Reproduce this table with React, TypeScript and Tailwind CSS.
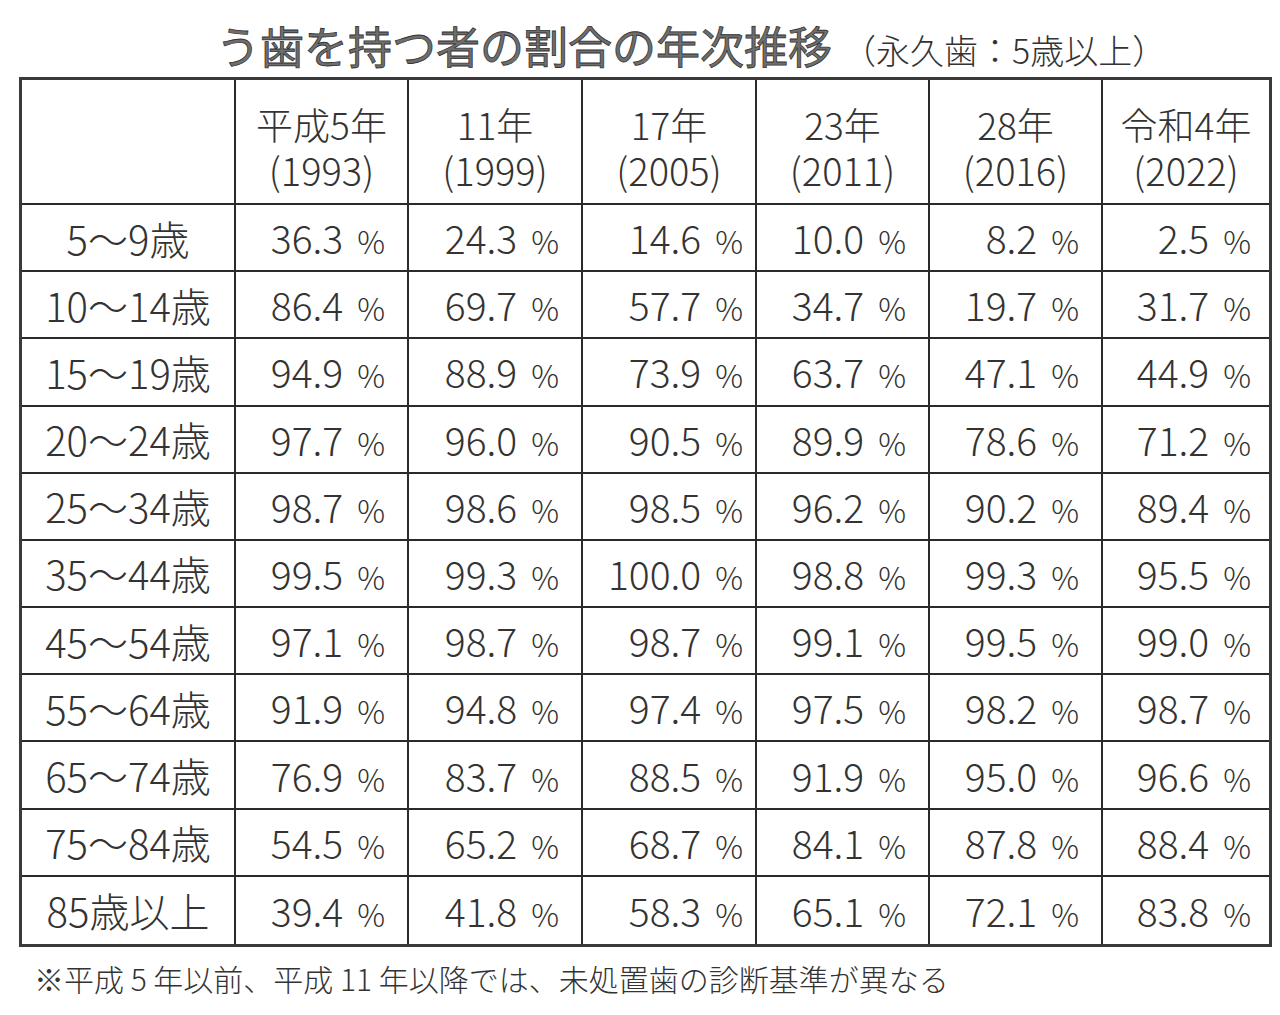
import React from "react";

const FONT = { fontFamily: '"Noto Sans CJK JP", "Noto Sans", sans-serif' };

const headers: [string, string][] = [
  ["平成5年", "(1993)"],
  ["11年", "(1999)"],
  ["17年", "(2005)"],
  ["23年", "(2011)"],
  ["28年", "(2016)"],
  ["令和4年", "(2022)"],
];

const rows: [string, string[]][] = [
  ["5〜9歳", ["36.3", "24.3", "14.6", "10.0", "8.2", "2.5"]],
  ["10〜14歳", ["86.4", "69.7", "57.7", "34.7", "19.7", "31.7"]],
  ["15〜19歳", ["94.9", "88.9", "73.9", "63.7", "47.1", "44.9"]],
  ["20〜24歳", ["97.7", "96.0", "90.5", "89.9", "78.6", "71.2"]],
  ["25〜34歳", ["98.7", "98.6", "98.5", "96.2", "90.2", "89.4"]],
  ["35〜44歳", ["99.5", "99.3", "100.0", "98.8", "99.3", "95.5"]],
  ["45〜54歳", ["97.1", "98.7", "98.7", "99.1", "99.5", "99.0"]],
  ["55〜64歳", ["91.9", "94.8", "97.4", "97.5", "98.2", "98.7"]],
  ["65〜74歳", ["76.9", "83.7", "88.5", "91.9", "95.0", "96.6"]],
  ["75〜84歳", ["54.5", "65.2", "68.7", "84.1", "87.8", "88.4"]],
  ["85歳以上", ["39.4", "41.8", "58.3", "65.1", "72.1", "83.8"]],
];

const padCls = ["pr-[22px]", "pr-[22px]", "pr-[12px]", "pr-[22px]", "pr-[22px]", "pr-[18px]"];

export default function App() {
  return (
    <div className="w-[1280px] h-[1015px] bg-white text-[#333] overflow-hidden" style={FONT}>
      <div className="flex items-end pl-[216px] pt-[16px] h-[77px] pb-[10px]">
        <span className="text-[44px] leading-none font-normal text-[#6e6e6e] [-webkit-text-stroke:0.8px_#333]">
          う歯を持つ者の割合の年次推移
        </span>
        <span className="text-[34px] leading-none ml-[10px] font-light text-[#333]">（永久歯：5歳以上）</span>
      </div>
      <div className="ml-[19px] w-[1253px] h-[870px] border-[3px] border-[#3a3a3a] grid grid-cols-[214px_173px_174px_174px_173px_173px_166px] grid-rows-[125px_repeat(11,1fr)]">
        <div className="border-r-2 border-b-2 border-[#2a2a2a]" />
        {headers.map(([a, b], i) => (
          <div
            key={i}
            className={`flex items-center justify-center pt-[10px] border-b-2 border-[#2a2a2a] ${i < 5 ? "border-r-2" : ""}`}
          >
            <p className="text-center font-light leading-[46px] text-[37px]">
              {a}
              <br />
              <span className="text-[38px]">{b}</span>
            </p>
          </div>
        ))}
        {rows.map(([label, vals], r) => (
          <React.Fragment key={r}>
            <div
              className={`flex items-center justify-center border-r-2 border-[#2a2a2a] ${r < 10 ? "border-b-2" : ""}`}
            >
              <span className="text-[40px] leading-none font-light">{label}</span>
            </div>
            {vals.map((v, c) => (
              <div
                key={c}
                className={`flex items-center justify-end border-[#2a2a2a] ${padCls[c]} ${c < 5 ? "border-r-2" : ""} ${r < 10 ? "border-b-2" : ""}`}
              >
                <div className="flex items-baseline">
                  <span className="text-[39px] leading-none font-light">{v}</span>
                  <span className="text-[31px] leading-none ml-[14px] font-light">%</span>
                </div>
              </div>
            ))}
          </React.Fragment>
        ))}
      </div>
      <div className="pl-[34px] pt-[16px] text-[30px] leading-none font-light text-[#333]">
        ※平成 5 年以前、平成 11 年以降では、未処置歯の診断基準が異なる
      </div>
    </div>
  );
}
